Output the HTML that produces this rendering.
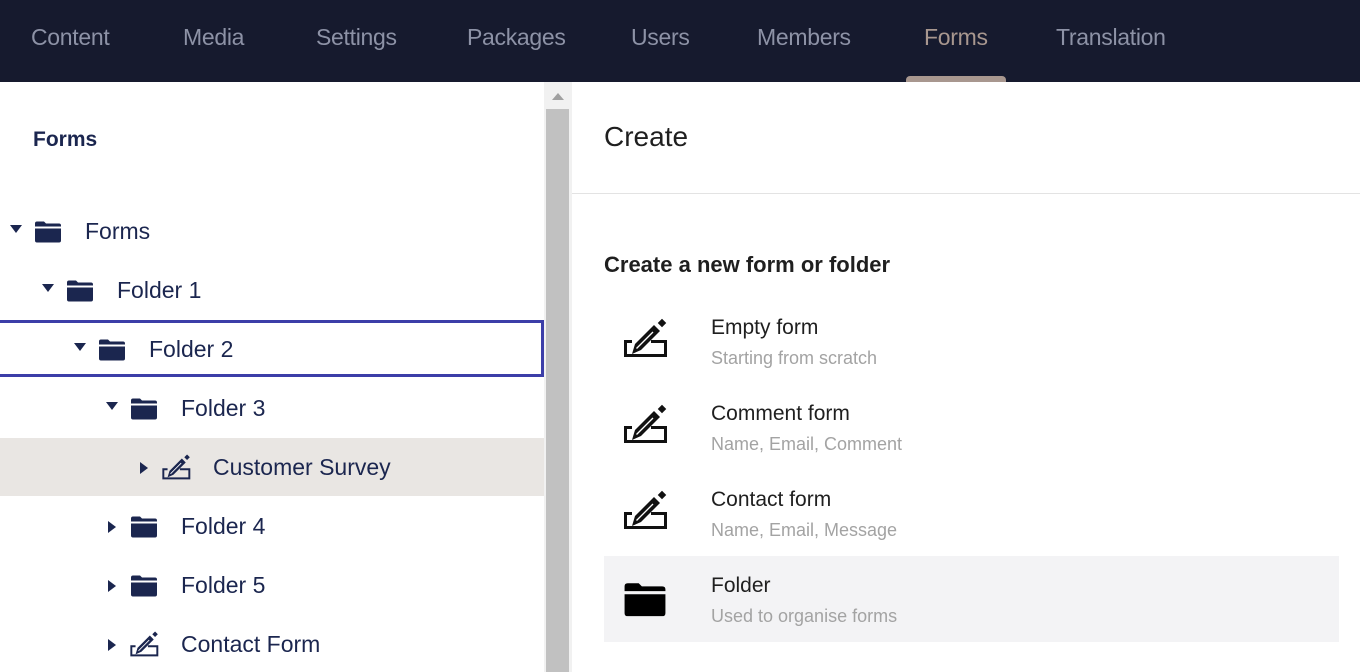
<!DOCTYPE html>
<html><head><meta charset="utf-8"><style>
*{margin:0;padding:0;box-sizing:border-box}
html,body{width:1360px;height:672px;overflow:hidden}
body{background:#fff;font-family:"Liberation Sans",sans-serif;position:relative}
.nav{position:absolute;left:0;top:0;width:1360px;height:82px;background:#161a2e}
.nav span{position:absolute;top:24px;font-size:23px;color:#8d92a6;letter-spacing:-0.3px}
.ind{position:absolute;left:906px;top:76px;width:100px;height:6px;background:#a8978f;border-radius:4px 4px 0 0}
.row{position:absolute;left:0;width:544px;height:58px}
.row .c{position:absolute;top:23px;width:0;height:0}
.down{border-left:6px solid transparent;border-right:6px solid transparent;border-top:8px solid #1b264f}
.right{border-top:6px solid transparent;border-bottom:6px solid transparent;border-left:8px solid #1b264f}
.row svg{position:absolute}
.row .l{position:absolute;top:16px;font-size:23px;color:#1b264f}
.sb{position:absolute;left:544px;top:82px;width:28px;height:590px;background:#f1f1f1}
.sb .th{position:absolute;left:2px;top:27px;width:23px;height:570px;background:#c1c1c1}
.sb .ar{position:absolute;left:8px;top:11px;border-left:6px solid transparent;border-right:6px solid transparent;border-bottom:7px solid #a0a0a0}
.rp{position:absolute;left:572px;top:82px;width:788px;height:590px;background:#fff}
.h{position:absolute;left:32px;top:39px;font-size:28px;color:#1f1f1f}
.hr{position:absolute;left:0;top:111px;width:788px;height:1px;background:#e3e3e3}
.sub{position:absolute;left:32px;top:170px;font-size:22px;font-weight:bold;color:#1f1f1f}
.it{position:absolute;left:32px;width:735px;height:86px}
.it .a{position:absolute;left:107px;top:18px;font-size:21px;color:#1f1f1f}
.it .b{position:absolute;left:107px;top:50px;font-size:18px;color:#a3a3a3}
.it svg{position:absolute;left:18px;top:20px}
</style></head><body>
<div class="nav">
<span style="left:31px">Content</span><span style="left:183px">Media</span><span style="left:316px">Settings</span><span style="left:467px">Packages</span><span style="left:631px">Users</span><span style="left:757px">Members</span><span style="left:924px;color:#a8978f">Forms</span><span style="left:1056px">Translation</span>
<div class="ind"></div>
</div>
<svg width="0" height="0" style="position:absolute"><defs>
<symbol id="fo" viewBox="0 0 28 22"><path d="M1 3 Q1 1 3 1 H10 L12 3 H25 Q27 3 27 5 V6 H1Z M1 8 H27 V20 Q27 22 25 22 H3 Q1 22 1 20Z" fill="currentColor"/></symbol>
<symbol id="fm" viewBox="0 0 46 40"><path d="M10 23.5 H3.5 V37.5 H43.5 V23.5 H29" fill="none" stroke="currentColor" stroke-width="3"/><path d="M10 36 L13 26 L32 7 L38 13 L19 32 Z" fill="currentColor"/><path d="M14.5 30.5 L31 14" stroke="#fff" stroke-width="1.3"/><rect x="37" y="2" width="6" height="6" transform="rotate(45 40 5)" fill="currentColor"/></symbol>
</defs></svg>
<div style="position:absolute;left:0;top:438px;width:544px;height:58px;background:#e9e6e3"></div>
<div style="position:absolute;left:0;top:320px;width:544px;height:57px;border:3px solid #3c3ea8;border-left:none"></div>

<div class="row" style="top:202px"><div class="c down" style="left:10px"></div><svg style="left:34px;top:18px;color:#1b264f" width="28" height="23"><use href="#fo"/></svg><div class="l" style="left:85px">Forms</div></div>
<div class="row" style="top:261px"><div class="c down" style="left:42px"></div><svg style="left:66px;top:18px;color:#1b264f" width="28" height="23"><use href="#fo"/></svg><div class="l" style="left:117px">Folder 1</div></div>
<div class="row" style="top:320px"><div class="c down" style="left:74px"></div><svg style="left:98px;top:18px;color:#1b264f" width="28" height="23"><use href="#fo"/></svg><div class="l" style="left:149px">Folder 2</div></div>
<div class="row" style="top:379px"><div class="c down" style="left:106px"></div><svg style="left:130px;top:18px;color:#1b264f" width="28" height="23"><use href="#fo"/></svg><div class="l" style="left:181px">Folder 3</div></div>
<div class="row" style="top:438px"><div class="c right" style="left:140px;top:24px"></div><svg style="left:161px;top:16px;color:#1b264f" width="30" height="26" viewBox="0 0 46 40"><use href="#fm"/></svg><div class="l" style="left:213px">Customer Survey</div></div>
<div class="row" style="top:497px"><div class="c right" style="left:108px;top:24px"></div><svg style="left:130px;top:18px;color:#1b264f" width="28" height="23"><use href="#fo"/></svg><div class="l" style="left:181px">Folder 4</div></div>
<div class="row" style="top:556px"><div class="c right" style="left:108px;top:24px"></div><svg style="left:130px;top:18px;color:#1b264f" width="28" height="23"><use href="#fo"/></svg><div class="l" style="left:181px">Folder 5</div></div>
<div class="row" style="top:615px"><div class="c right" style="left:108px;top:24px"></div><svg style="left:129px;top:16px;color:#1b264f" width="30" height="26" viewBox="0 0 46 40"><use href="#fm"/></svg><div class="l" style="left:181px">Contact Form</div></div>

<div style="position:absolute;left:33px;top:128px;font-size:21px;font-weight:bold;color:#1b264f">Forms</div>

<div class="sb"><div class="ar"></div><div class="th"></div></div>
<div class="rp">
<div class="h">Create</div>
<div class="hr"></div>
<div class="sub">Create a new form or folder</div>
<div class="it" style="top:216px"><svg width="46" height="40" style="color:#111"><use href="#fm"/></svg><div class="a">Empty form</div><div class="b">Starting from scratch</div></div>
<div class="it" style="top:302px"><svg width="46" height="40" style="color:#111"><use href="#fm"/></svg><div class="a">Comment form</div><div class="b">Name, Email, Comment</div></div>
<div class="it" style="top:388px"><svg width="46" height="40" style="color:#111"><use href="#fm"/></svg><div class="a">Contact form</div><div class="b">Name, Email, Message</div></div>
<div class="it" style="top:474px;background:#f3f3f5"><svg width="44" height="36" viewBox="0 0 28 22" style="left:19px;top:25px;color:#000"><use href="#fo"/></svg><div class="a">Folder</div><div class="b">Used to organise forms</div></div>
</div>
</body></html>
